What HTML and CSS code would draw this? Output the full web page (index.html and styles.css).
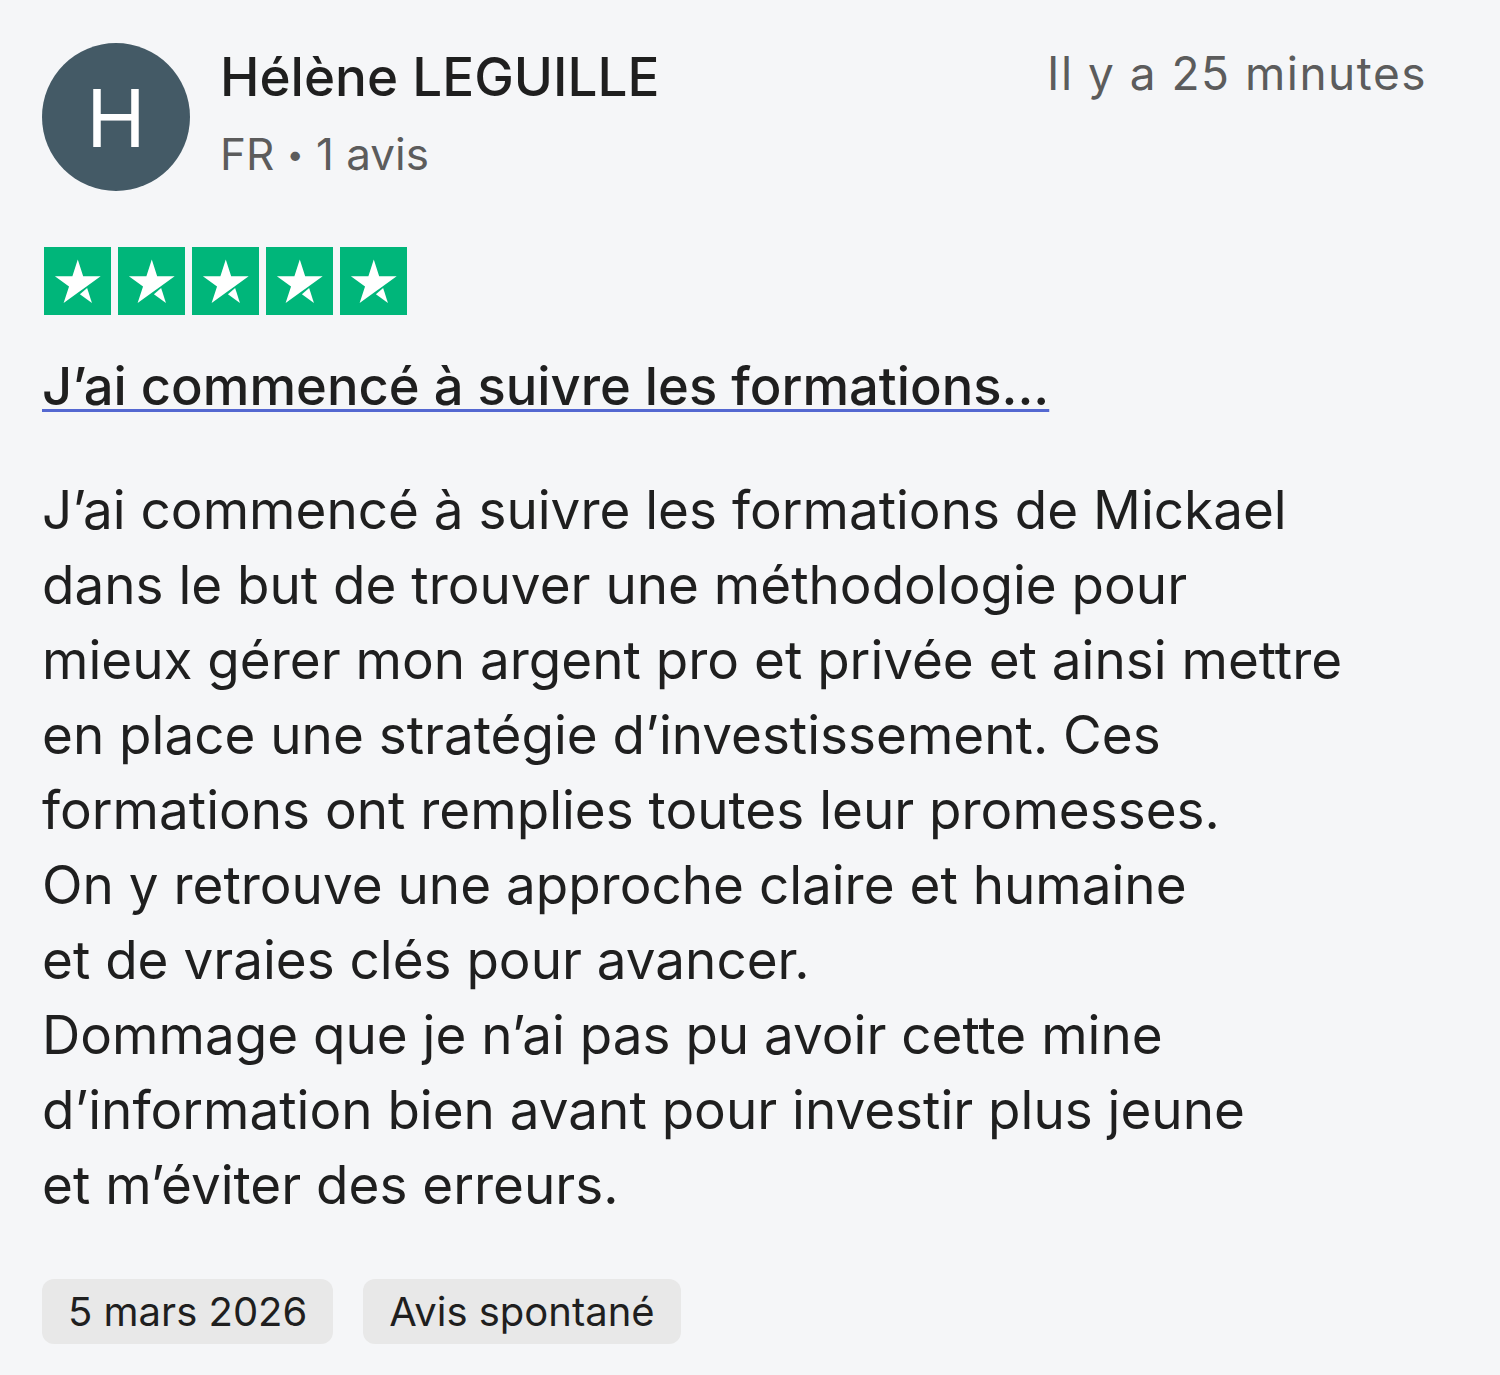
FILE: index.html
```html
<!DOCTYPE html>
<html lang="fr">
<head>
  <meta charset="UTF-8" />
  <title>Avis - Hélène LEGUILLE</title>
  <link rel="stylesheet" href="styles.css">
</head>
<body>

  <article class="review">
    <header class="review-head">
      <div class="avatar">H</div>
      <div class="consumer">
        <div class="name">Hélène LEGUILLE</div>
        <div class="meta">FR <span class="dot">•</span> 1 avis</div>
      </div>
      <time class="ago">Il y a 25 minutes</time>
    </header>

    <!-- 5 étoiles -->
    <div class="stars">
      <span class="star"><svg viewBox="0 0 24 24"><path d="M12.1 4.3l1.93 5.96h6.27l-5.07 3.68-3.13 2.27-5.07 3.68 1.94-5.95-5.07-3.68h6.27z"/><path d="M15.45 14.55l1.72 5.34-4.3-3.12z"/></svg></span>
      <span class="star"><svg viewBox="0 0 24 24"><path d="M12.1 4.3l1.93 5.96h6.27l-5.07 3.68-3.13 2.27-5.07 3.68 1.94-5.95-5.07-3.68h6.27z"/><path d="M15.45 14.55l1.72 5.34-4.3-3.12z"/></svg></span>
      <span class="star"><svg viewBox="0 0 24 24"><path d="M12.1 4.3l1.93 5.96h6.27l-5.07 3.68-3.13 2.27-5.07 3.68 1.94-5.95-5.07-3.68h6.27z"/><path d="M15.45 14.55l1.72 5.34-4.3-3.12z"/></svg></span>
      <span class="star"><svg viewBox="0 0 24 24"><path d="M12.1 4.3l1.93 5.96h6.27l-5.07 3.68-3.13 2.27-5.07 3.68 1.94-5.95-5.07-3.68h6.27z"/><path d="M15.45 14.55l1.72 5.34-4.3-3.12z"/></svg></span>
      <span class="star"><svg viewBox="0 0 24 24"><path d="M12.1 4.3l1.93 5.96h6.27l-5.07 3.68-3.13 2.27-5.07 3.68 1.94-5.95-5.07-3.68h6.27z"/><path d="M15.45 14.55l1.72 5.34-4.3-3.12z"/></svg></span>
    </div>

    <h2 class="title"><a href="#">J’ai commencé à suivre les formations...</a></h2>

    <p class="text">J’ai commencé à suivre les formations de Mickael<br>
dans le but de trouver une méthodologie pour<br>
mieux gérer mon argent pro et privée et ainsi mettre<br>
en place une stratégie d’investissement. Ces<br>
formations ont remplies toutes leur promesses.<br>
On y retrouve une approche claire et humaine<br>
et de vraies clés pour avancer.<br>
Dommage que je n’ai pas pu avoir cette mine<br>
d’information bien avant pour investir plus jeune<br>
et m’éviter des erreurs.</p>

    <div class="tags">
      <span class="tag">5 mars 2026</span>
      <span class="tag">Avis spontané</span>
    </div>
  </article>

</body>
</html>
```

FILE: styles.css
```css
body { margin: 0; background: #f5f6f8; font-family: Inter, "Noto Sans", sans-serif; color: #1f1f1f; }
.review { padding: 43px 73px 0 42px; }
.review-head { display: flex; align-items: flex-start; }
.avatar { width: 148px; height: 148px; border-radius: 50%; background: #445a66; color: #fff; font-size: 80px; font-weight: 400; display: flex; align-items: center; justify-content: center; flex-shrink: 0; }
.consumer { margin-left: 30px; flex: 1; }
.name { font-size: 53px; font-weight: 500; line-height: 72px; margin-top: -2px; }
.meta { font-size: 44px; color: #5c5c5c; line-height: 72px; margin-top: 5px; }
.dot { font-size: 30px; vertical-align: 5px; }
.ago { font-size: 46px; color: #5c5c5c; letter-spacing: 1.5px; line-height: 66px; margin-top: -3px; }
.stars { display: flex; gap: 7px; margin: 56px 0 0 2px; }
.star { width: 67px; height: 68px; background: #00b67a; display: flex; }
.star svg { width: 100%; height: 100%; fill: #fff; }
.title { margin: 41px 0 0; font-size: 52.5px; font-weight: 500; line-height: 60px; }
.title a { color: #1f1f1f; text-decoration: underline 3px #5468d1; text-underline-offset: 4px; }
.text { margin: 57px 0 0; font-size: 53px; line-height: 75px; }
.tags { display: flex; gap: 30px; margin-top: 56px; }
.tag { background: #e8e8e8; border-radius: 12px; padding: 0 26px; font-size: 40px; line-height: 65px; }
```
